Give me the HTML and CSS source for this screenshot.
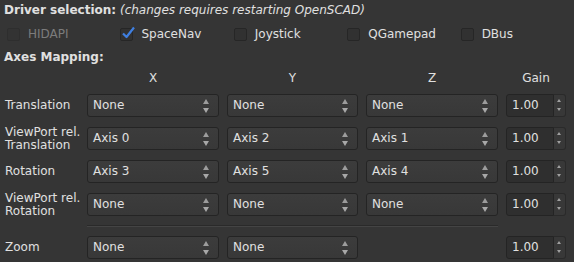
FILE: index.html
```html
<!DOCTYPE html>
<html lang="en">
<head>
    <meta charset="UTF-8">
    <title>Input Driver Settings</title>
    <link rel="stylesheet" href="styles.css">
</head>
<body>
    <div class="panel">
        <!-- ドライバ選択 -->
        <div class="title-line">
            <b>Driver selection:</b> <i>(changes requires restarting OpenSCAD)</i>
        </div>
        <div class="driver-row">
            <label class="check disabled"><span class="box"></span>HIDAPI</label>
            <label class="check checked">
                <span class="box">
                    <svg class="tick" width="15" height="15" viewBox="0 0 15 15"><path d="M2 7.5 L5.5 11 L13 1.5" fill="none" stroke="#3f7fe0" stroke-width="2.2" stroke-linejoin="round"/></svg>
                </span>SpaceNav
            </label>
            <label class="check"><span class="box"></span>Joystick</label>
            <label class="check"><span class="box"></span>QGamepad</label>
            <label class="check"><span class="box"></span>DBus</label>
        </div>

        <!-- 軸マッピング -->
        <div class="title-line section"><b>Axes Mapping:</b></div>
        <div class="grid">
            <div></div>
            <div class="head">X</div>
            <div class="head">Y</div>
            <div class="head">Z</div>
            <div class="head">Gain</div>

            <div class="label">Translation</div>
            <div class="combo">None</div>
            <div class="combo">None</div>
            <div class="combo">None</div>
            <div class="spin"><span class="field">1.00</span><span class="spin-btn"></span></div>

            <div class="label">ViewPort rel.<br>Translation</div>
            <div class="combo">Axis 0</div>
            <div class="combo">Axis 2</div>
            <div class="combo">Axis 1</div>
            <div class="spin"><span class="field">1.00</span><span class="spin-btn"></span></div>

            <div class="label">Rotation</div>
            <div class="combo">Axis 3</div>
            <div class="combo">Axis 5</div>
            <div class="combo">Axis 4</div>
            <div class="spin"><span class="field">1.00</span><span class="spin-btn"></span></div>

            <div class="label">ViewPort rel.<br>Rotation</div>
            <div class="combo">None</div>
            <div class="combo">None</div>
            <div class="combo">None</div>
            <div class="spin"><span class="field">1.00</span><span class="spin-btn"></span></div>

            <div></div>
            <div class="separator"></div>
            <div></div>

            <div class="label">Zoom</div>
            <div class="combo">None</div>
            <div class="combo">None</div>
            <div></div>
            <div class="spin"><span class="field">1.00</span><span class="spin-btn"></span></div>
        </div>
    </div>
</body>
</html>
```

FILE: styles.css
```css
html, body {
    margin: 0;
    height: 100%;
}
body {
    background: #353535;
    color: #e0e0e0;
    font-family: "DejaVu Sans", "Noto Sans", sans-serif;
    font-size: 12px;
}
* {
    box-sizing: border-box;
}
.panel {
    padding: 3px 0 0 4px;
}
.title-line {
    height: 14px;
    line-height: 14px;
    white-space: nowrap;
}
.title-line b { font-weight: bold; }
.section { margin-top: 9px; }

/* チェックボックス行 */
.driver-row {
    display: flex;
    margin-top: 10px;
    padding-left: 3px;
    height: 14px;
}
.check {
    width: 113.75px;
    display: flex;
    align-items: center;
    gap: 8px;
    line-height: 14px;
}
.box {
    position: relative;
    width: 13px;
    height: 13px;
    border: 1px solid #262626;
    border-radius: 2px;
    background: #313131;
    flex: none;
}
.tick {
    position: absolute;
    left: 0;
    top: -3px;
}
.check.disabled { color: #7c7c7c; }
.check.disabled .box { border-color: #2e2e2e; background: #333333; }

/* 軸マッピング表 */
.grid {
    display: grid;
    grid-template-columns: 75px 132px 131px 132px 60px;
    grid-template-rows: 12px repeat(4, 23px) 0 23px;
    column-gap: 8px;
    row-gap: 10px;
    margin-top: 8px;
    align-items: center;
}
.head {
    text-align: center;
    line-height: 12px;
}
.label {
    line-height: 13px;
    white-space: nowrap;
    padding-left: 1px;
}
.combo {
    position: relative;
    height: 23px;
    line-height: 21px;
    padding-left: 5px;
    border: 1px solid #242424;
    border-radius: 3px;
    background: linear-gradient(#3c3c3c, #383838);
}
.combo::before, .combo::after {
    content: "";
    position: absolute;
    right: 9px;
    border-left: 3px solid transparent;
    border-right: 3px solid transparent;
}
.combo::before {
    top: 4px;
    border-bottom: 5px solid #9c9c9c;
}
.combo::after {
    top: 13px;
    border-top: 5px solid #a8a8a8;
}
.spin {
    display: flex;
    height: 23px;
}
.field {
    flex: 1;
    line-height: 21px;
    padding-left: 5px;
    border: 1px solid #242424;
    border-radius: 3px 0 0 3px;
    background: #2f2f2f;
}
.spin-btn {
    position: relative;
    width: 12px;
    border: 1px solid #2a2a2a;
    border-left: none;
    border-radius: 0 3px 3px 0;
    background: #383838;
}
.spin-btn::before, .spin-btn::after {
    content: "";
    position: absolute;
    left: 3px;
    border-left: 2px solid transparent;
    border-right: 2px solid transparent;
}
.spin-btn::before {
    top: 4px;
    border-bottom: 3px solid #a0a0a0;
}
.spin-btn::after {
    bottom: 5px;
    border-top: 3px solid #a0a0a0;
}
.separator {
    grid-column: 2 / 5;
    align-self: start;
    height: 2px;
    margin-top: -1px;
    border-top: 1px solid #2a2a2a;
    border-bottom: 1px solid #444444;
}
```
